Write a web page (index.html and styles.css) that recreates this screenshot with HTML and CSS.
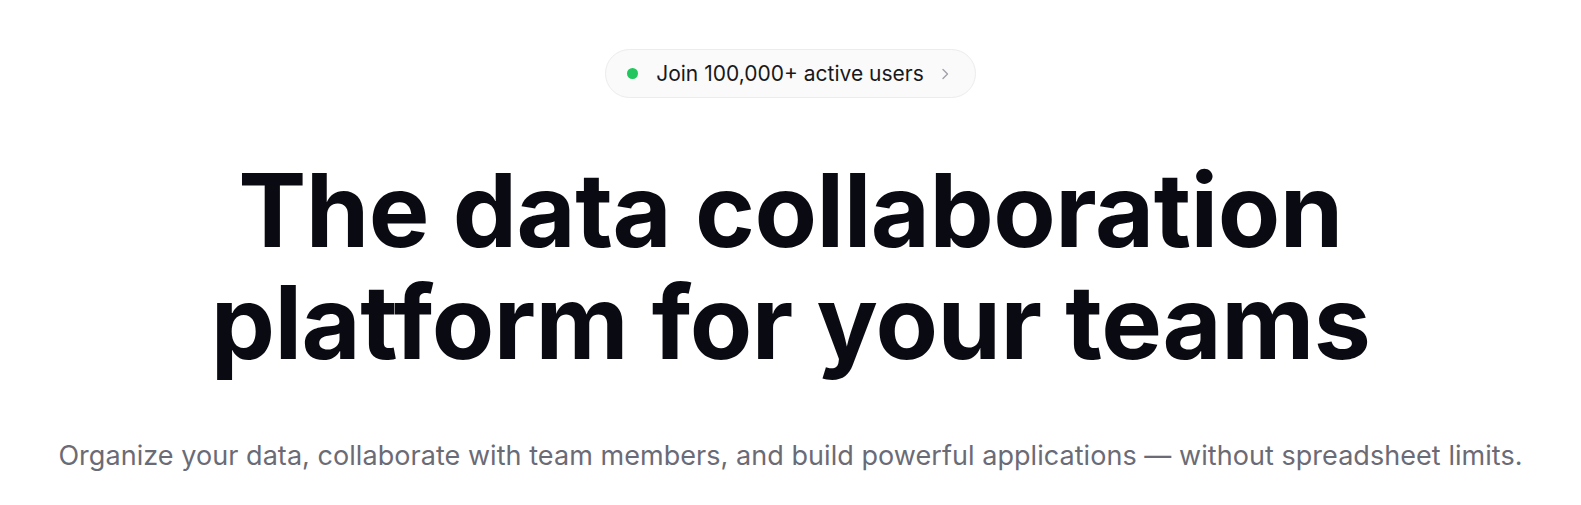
FILE: index.html
```html
<!DOCTYPE html>
<html lang="en">
<head>
<meta charset="utf-8">
<title>Data collaboration platform</title>
<link rel="stylesheet" href="styles.css">
</head>
<body>
<main class="hero">
  <a class="badge" href="#">
    <span class="badge-dot"></span>
    <span class="badge-text">Join 100,000+ active users</span>
    <svg class="badge-chevron" width="8" height="12" viewBox="0 0 8 12" fill="none" stroke="currentColor" stroke-width="1.4" stroke-linecap="round" stroke-linejoin="round"><path d="M2 1.5 6.5 6 2 10.5"/></svg>
  </a>
  <h1 class="title">The data collaboration<br>platform for your teams</h1>
  <p class="subtitle">Organize your data, collaborate with team members, and build powerful applications — without spreadsheet limits.</p>
</main>
</body>
</html>
```
FILE: styles.css
```css
* { box-sizing: border-box; }
html, body { margin: 0; padding: 0; background: #ffffff; }
body { font-family: Inter, "Noto Sans", sans-serif; }

.hero {
  display: flex;
  flex-direction: column;
  align-items: center;
  padding-top: 49px;
}

.badge {
  display: inline-flex;
  align-items: center;
  height: 49px;
  padding: 0 26px 0 21px;
  border: 1px solid #ececee;
  border-radius: 999px;
  background: #fafafa;
  text-decoration: none;
  color: #18181b;
}
.badge-dot {
  width: 11px;
  height: 11px;
  border-radius: 50%;
  background: #22c55e;
  margin-right: 18px;
}
.badge-text {
  font-size: 21px;
  font-weight: 400;
}
.badge-chevron {
  color: #a1a1aa;
  margin-left: 17px;
}

.title {
  margin: 56px 0 0;
  font-size: 102px;
  line-height: 112px;
  font-weight: 700;
  letter-spacing: -0.5px;
  color: #0a0a12;
  text-align: center;
}

.subtitle {
  margin: 60px 0 0;
  font-size: 27px;
  line-height: 36px;
  letter-spacing: 0.05px;
  color: #6b6b76;
  text-align: center;
}
```
